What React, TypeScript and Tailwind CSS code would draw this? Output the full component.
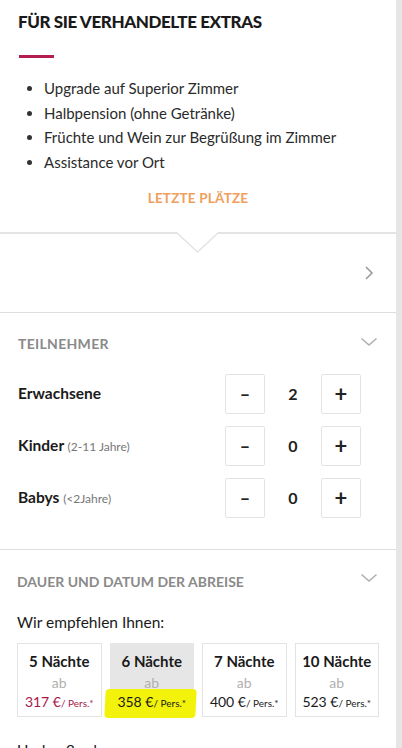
import React from "react";

const font = { fontFamily: "Lato, 'Open Sans', sans-serif" };

function ChevronRight() {
  return (
    <svg width="10" height="16" viewBox="0 0 10 16" fill="none">
      <path d="M2 2 L8 8 L2 14" stroke="#9a9a9a" strokeWidth="1.6" />
    </svg>
  );
}

function ChevronDown() {
  return (
    <svg width="18" height="10" viewBox="0 0 18 10" fill="none">
      <path d="M1.5 1.5 L9 8 L16.5 1.5" stroke="#b0b0b0" strokeWidth="1.6" />
    </svg>
  );
}

function Stepper({ value }: { value: number }) {
  return (
    <div className="flex items-center">
      <button className="w-10 h-10 border border-[#e3e3e3] rounded-[2px] bg-white flex items-center justify-center text-[#222] text-[18px] font-bold leading-none">
        –
      </button>
      <div className="w-[56px] text-center text-[16px] font-bold text-[#222]">{value}</div>
      <button className="w-10 h-10 border border-[#e3e3e3] rounded-[2px] bg-white flex items-center justify-center text-[#222] text-[22px] font-bold leading-none">
        +
      </button>
    </div>
  );
}

function Card({
  nights,
  price,
  selected,
  red,
}: {
  nights: string;
  price: string;
  selected?: boolean;
  red?: boolean;
}) {
  return (
    <div
      className={
        selected
          ? "h-[74px] bg-[#e6e6e6] flex flex-col items-center pt-[7px]"
          : "h-[74px] bg-white border border-[#e3e3e3] flex flex-col items-center pt-[6px]"
      }
    >
      <div className="text-[15px] font-bold text-[#1a1a1a] leading-[22px]">{nights}</div>
      <div className="text-[14px] text-[#b0b0b0] leading-[18px] mt-[2px]">ab</div>
      <div className="relative leading-[18px]">
        {selected && (
          <span className="absolute left-[-12px] right-[-10px] top-[-3px] bottom-[-6px] bg-[#f2f20a] rounded-[4px] -skew-x-3" />
        )}
        <span className={"relative text-[14px] " + (red ? "text-[#a8184a]" : "text-[#1a1a1a]")}>
          {price} €
        </span>
        <span className={"relative text-[10px] " + (red ? "text-[#a8184a]" : "text-[#1a1a1a]")}>/ Pers.*</span>
      </div>
    </div>
  );
}

export default function App() {
  return (
    <div className="flex w-[402px] h-[748px] overflow-hidden bg-white" style={font}>
      <div className="flex-1 flex flex-col">
        {/* Extras */}
        <div className="px-[18px] pt-[10px] pb-[24px]">
          <h2 className="text-[17px] font-black text-[#1a1a1a] leading-[24px] tracking-[-0.4px]">
            FÜR SIE VERHANDELTE EXTRAS
          </h2>
          <div className="w-[35px] h-[3px] bg-[#b51d50] mt-[21px] ml-[1px]" />
          <ul className="mt-[18px] pl-[26px] list-disc text-[15px] text-[#2a2a2a] leading-[24.5px] marker:text-[#333]">
            <li>Upgrade auf Superior Zimmer</li>
            <li>Halbpension (ohne Getränke)</li>
            <li>Früchte und Wein zur Begrüßung im Zimmer</li>
            <li>Assistance vor Ort</li>
          </ul>
          <div className="mt-[14px] text-center text-[13.5px] font-bold text-[#f0a05c] tracking-[0.2px] leading-[20px]">
            LETZTE PLÄTZE
          </div>
        </div>

        {/* Notch divider + arrow row */}
        <div className="relative border-t-2 border-[#e4e4e4]">
          <svg
            className="absolute left-[177px] top-[-2px]"
            width="41"
            height="22"
            viewBox="0 0 41 22"
          >
            <polygon points="0,0 20.5,20 41,0" fill="white" />
            <polyline points="0,1 20.5,20 41,1" fill="none" stroke="#e4e4e4" strokeWidth="1.6" />
          </svg>
          <div className="h-[78px] flex items-center justify-end pr-[22px]">
            <ChevronRight />
          </div>
        </div>

        {/* Teilnehmer */}
        <div className="border-t border-[#dedede] pl-[18px] pr-[35px]">
          <div className="flex items-center justify-between h-[20px] mt-[20px]">
            <span className="text-[14px] font-bold text-[#8a8a8a] tracking-[0.3px]">TEILNEHMER</span>
            <span className="-mr-[17px] relative top-[-1px]">
              <ChevronDown />
            </span>
          </div>
          <div className="mt-[21px] flex flex-col gap-3 pb-[31px]">
            <div className="flex items-center justify-between">
              <span className="text-[15.5px] font-bold text-[#1a1a1a]">Erwachsene</span>
              <Stepper value={2} />
            </div>
            <div className="flex items-center justify-between">
              <span className="text-[15.5px] font-bold text-[#1a1a1a]">
                Kinder <span className="text-[12px] font-normal text-[#777]">(2-11 Jahre)</span>
              </span>
              <Stepper value={0} />
            </div>
            <div className="flex items-center justify-between">
              <span className="text-[15.5px] font-bold text-[#1a1a1a]">
                Babys <span className="text-[12px] font-normal text-[#777]">(&lt;2Jahre)</span>
              </span>
              <Stepper value={0} />
            </div>
          </div>
        </div>

        {/* Dauer */}
        <div className="border-t border-[#dedede] px-[17px]">
          <div className="flex items-center justify-between h-[20px] mt-[21px]">
            <span className="text-[14px] font-bold text-[#8a8a8a]">
              DAUER UND DATUM DER ABREISE
            </span>
            <span className="mr-[1px] relative top-[-3px]">
              <ChevronDown />
            </span>
          </div>
          <div className="mt-[20px] text-[15.5px] text-[#1a1a1a] leading-[22px]">Wir empfehlen Ihnen:</div>
          <div className="mt-[10px] grid grid-cols-4 gap-2">
            <Card nights="5 Nächte" price="317" red />
            <Card nights="6 Nächte" price="358" selected />
            <Card nights="7 Nächte" price="400" />
            <Card nights="10 Nächte" price="523" />
          </div>
          <div className="mt-[22px] text-[15.5px] text-[#1a1a1a] leading-[22px]">Und außerdem:</div>
        </div>
      </div>
      <div className="w-[6px] bg-[#e6e6e6]" />
    </div>
  );
}
